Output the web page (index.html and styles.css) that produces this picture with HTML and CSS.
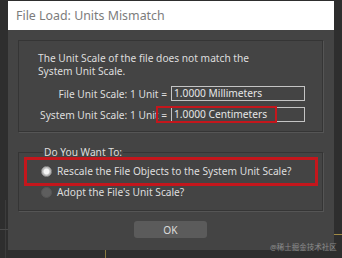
FILE: index.html
```html
<!DOCTYPE html>
<html lang="en">

<head>
    <meta charset="UTF-8">
    <meta name="viewport" content="width=device-width, initial-scale=1.0">
    <title>File Load: Units Mismatch</title>
    <link rel="stylesheet" href="styles.css">
</head>

<body>

    <div class="desk">
        <span class="desk-line line-v"></span>
        <span class="desk-line line-h"></span>
        <span class="desk-line line-gold-h"></span>
        <span class="desk-line line-gold-v"></span>

        <div class="dialog">
            <div class="titlebar">File Load: Units Mismatch</div>

            <div class="dlg-body">
                <div class="group info">
                    <p class="message">The Unit Scale of the file does not match the<br>System Unit Scale.</p>
                    <div class="scale-row">
                        <span class="scale-label">File Unit Scale: 1 Unit =</span>
                        <span class="scale-value">1.0000 Millimeters</span>
                    </div>
                    <div class="scale-row">
                        <span class="scale-label">System Unit Scale: 1 Unit =</span>
                        <span class="scale-value">1.0000 Centimeters</span>
                    </div>
                </div>

                <fieldset class="group choice">
                    <legend>Do You Want To:</legend>
                    <label class="radio-row">
                        <span class="radio checked"></span>
                        Rescale the File Objects to the System Unit Scale?
                    </label>
                    <label class="radio-row">
                        <span class="radio"></span>
                        Adopt the File's Unit Scale?
                    </label>
                </fieldset>

                <div class="actions">
                    <button class="ok-button">OK</button>
                </div>

                <!-- red marks drawn over the dialog -->
                <span class="mark mark-system"></span>
                <span class="mark mark-rescale"></span>
            </div>
        </div>

        <span class="watermark">@稀土掘金技术社区</span>
    </div>

</body>

</html>
```

FILE: styles.css
```css
/* General Reset */
* {
    box-sizing: border-box;
}

body {
    margin: 0;
    font-family: "Noto Sans", "Noto Sans CJK SC", sans-serif;
    background: #2d2d2d;
    overflow: hidden;
}

.desk {
    position: relative;
    width: 342px;
    height: 258px;
    padding: 1px 0 0 8px;
    background: #2e2e2e;
}

/* bits of the app window behind the dialog */
.desk-line {
    position: absolute;
    display: block;
}

.line-v {
    left: 5px;
    top: 200px;
    width: 1px;
    height: 58px;
    background: #3c3c3c;
}

.line-h {
    left: 0;
    top: 229px;
    width: 8px;
    height: 1px;
    background: #4a4a4a;
}

.line-gold-h {
    left: 334px;
    top: 234px;
    width: 8px;
    height: 1px;
    background: #a08a45;
}

.line-gold-v {
    left: 105px;
    top: 250px;
    width: 1px;
    height: 8px;
    background: #8a7a40;
}

/* Dialog */
.dialog {
    width: 326px;
    height: 249px;
    display: flex;
    flex-direction: column;
}

.titlebar {
    height: 29px;
    background: #ffffff;
    color: #7c7c7c;
    font-size: 12.4px;
    line-height: 29px;
    padding-left: 8px;
}

.dlg-body {
    position: relative;
    flex: 1;
    background: #444444;
    color: #dedede;
    font-size: 10.2px;
    padding: 10px 11px 0 10px;
    display: flex;
    flex-direction: column;
}

.group {
    border: 1px solid #353535;
    box-shadow: 1px 1px 0 #555555;
}

.info {
    height: 92px;
    padding: 11px 0 0 19px;
}

.message {
    margin: 0;
    line-height: 13px;
}

.scale-row {
    display: flex;
    align-items: center;
    height: 15px;
    margin-top: 6px;
}

.scale-row:first-of-type {
    margin-top: 8px;
}

.scale-label {
    width: 129px;
    text-align: right;
    white-space: nowrap;
    margin-right: 4px;
}

.scale-value {
    width: 134px;
    height: 15px;
    line-height: 13px;
    padding-left: 2px;
    border: 1px solid #c4c4c4;
    color: #e6e6e6;
}

/* Choice group */
.choice {
    margin: 13px 0 0;
    padding: 4px 0 9px 22px;
    height: 66px;
}

.choice legend {
    padding: 0 1px;
    margin-left: 2px;
    line-height: 14px;
}

.radio-row {
    display: flex;
    align-items: center;
    height: 16px;
    margin-bottom: 5px;
    white-space: nowrap;
}

.radio {
    width: 11px;
    height: 11px;
    border-radius: 50%;
    margin-right: 5px;
    background: #5e5e5e;
    border: 1px solid #565656;
}

.radio.checked {
    background: radial-gradient(circle, #f4f4f4 0 2.5px, #bdbdbd 3.5px);
    border-color: #8a8a8a;
}

.actions {
    display: flex;
    justify-content: center;
    margin-top: 10px;
}

.ok-button {
    width: 73px;
    height: 17px;
    padding: 0;
    border: none;
    border-radius: 3px;
    background: #5b5b5b;
    color: #dcdcdc;
    font: inherit;
    font-size: 10.2px;
}

/* red annotation boxes */
.mark {
    position: absolute;
    display: block;
    border: 2px solid #c4161c;
}

.mark-system {
    left: 148px;
    top: 76px;
    width: 121px;
    height: 17px;
}

.mark-rescale {
    left: 16px;
    top: 127px;
    width: 294px;
    height: 29px;
    border-width: 3px;
}

.watermark {
    position: absolute;
    left: 270px;
    top: 241px;
    font-size: 7.5px;
    color: #8c8c8c;
    white-space: nowrap;
}
```
